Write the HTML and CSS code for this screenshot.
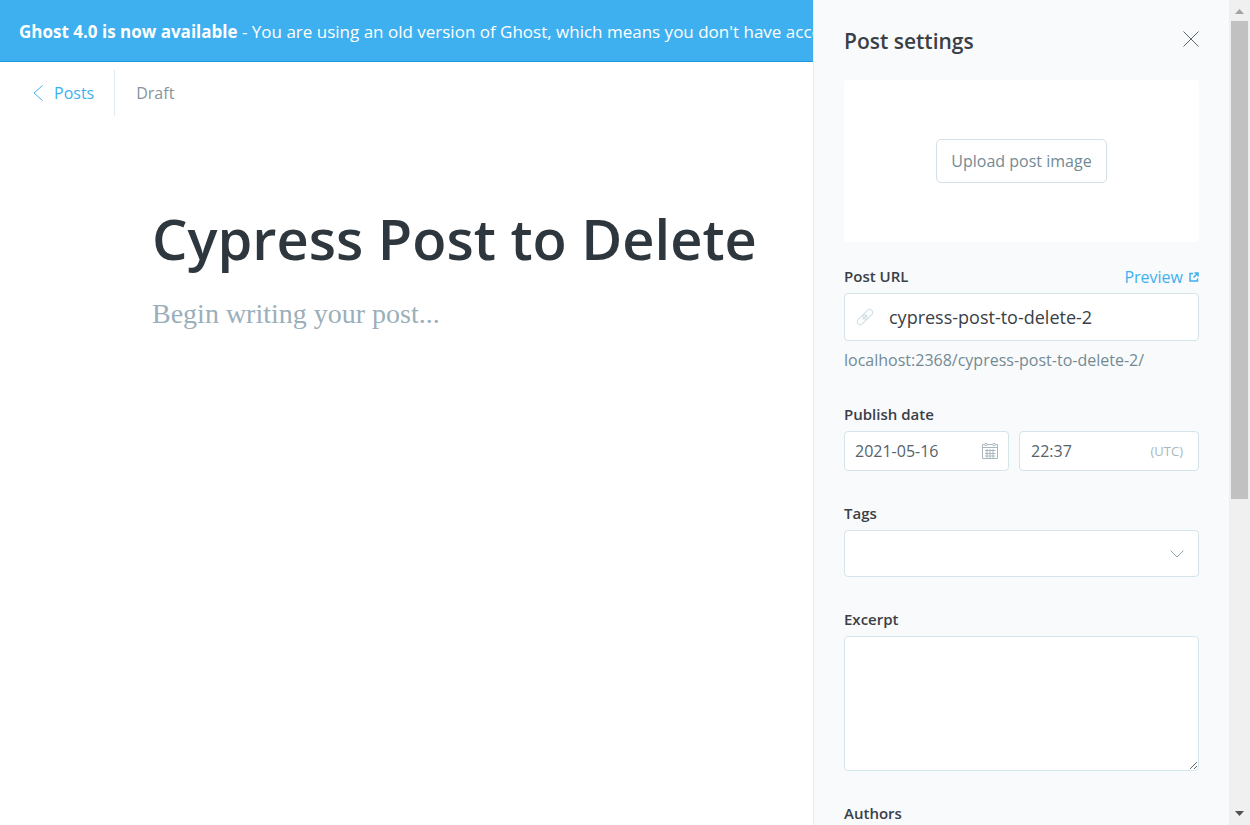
FILE: index.html
```html
<!DOCTYPE html>
<html lang="en">
<head>
<meta charset="utf-8">
<meta name="viewport" content="width=device-width, initial-scale=1">
<title>Post settings - Ghost</title>
<link rel="stylesheet" href="styles.css">
</head>
<body>
<div class="app">
  <main class="editor">
    <div class="banner"><strong>Ghost 4.0 is now available</strong> - You are using an old version of Ghost, which means you don't have access</div>
    <header class="editor-header">
      <a class="back" href="#posts">
        <svg class="back-icon" viewBox="0 0 10 16" aria-hidden="true"><path d="M9.500 .5 1 8l8.500 7.500"/></svg>
        Posts
      </a>
      <span class="status">Draft</span>
    </header>
    <article class="post">
      <h1 class="post-title">Cypress Post to Delete</h1>
      <p class="post-placeholder">Begin writing your post...</p>
    </article>
  </main>
  <aside class="settings">
    <header class="settings-header">
      <h2 class="settings-title">Post settings</h2>
      <button class="close" type="button" aria-label="Close">
        <svg class="close-icon" viewBox="0 0 16 16" aria-hidden="true"><path d="M.5.5l15 15M15.500.5l-15 15"/></svg>
      </button>
    </header>
    <div class="uploader"><button class="upload-button" type="button">Upload post image</button></div>
    <form class="form">
      <div class="group">
        <div class="label-row">
          <label class="label" for="url">Post URL</label>
          <a class="preview" href="#preview">Preview
            <svg class="preview-icon" viewBox="0 0 10 10" aria-hidden="true"><path d="M4 1.500H1v7.500h7.500V6.500M5.500 1H9v3.500M9 1 4.500 5.500"/></svg>
          </a>
        </div>
        <div class="field field-url">
          <svg class="link-icon" viewBox="0 0 18 18" aria-hidden="true">
            <g transform="rotate(-45 9 9)"><rect x="-.5" y="6" width="11" height="6" rx="3"/><rect x="7.500" y="6" width="11" height="6" rx="3"/><path d="M5.500 9h7"/></g>
          </svg>
          <input class="input input-large" id="url" type="text" value="cypress-post-to-delete-2">
        </div>
        <p class="hint">localhost:2368/cypress-post-to-delete-2/</p>
      </div>
      <div class="group">
        <label class="label" for="date">Publish date</label>
        <div class="date-row">
          <div class="field field-date">
            <input class="input" id="date" type="text" value="2021-05-16">
            <svg class="calendar-icon" viewBox="0 0 16 16" aria-hidden="true"><path d="M.5 1.500h15v14H.5zM.5 4.500h15M3 7.500h10.500M3 10.500h10.500M3 13h10.500M5 6v9M8 6v9M11 6v9"/><path class="ring" d="M2.500 1.500a1.500 1 0 0 1 3 0 1.500 1 0 0 1-3 0M10.500 1.500a1.500 1 0 0 1 3 0 1.500 1 0 0 1-3 0"/></svg>
          </div>
          <div class="field field-time">
            <input class="input" type="text" aria-label="Publish time" value="22:37">
            <span class="zone">(UTC)</span>
          </div>
        </div>
      </div>
      <div class="group">
        <label class="label" for="tags">Tags</label>
        <div class="field field-tags">
          <select class="select" id="tags"><option></option></select>
          <svg class="chevron" viewBox="0 0 14 8" aria-hidden="true"><path d="M.5.5 7 7 13.500.5"/></svg>
        </div>
      </div>
      <div class="group">
        <label class="label" for="excerpt">Excerpt</label>
        <textarea class="textarea" id="excerpt"></textarea>
      </div>
      <div class="group">
        <label class="label" for="authors">Authors</label>
        <input class="field" id="authors" type="text">
      </div>
    </form>
  </aside>
  <div class="scrollbar" aria-hidden="true">
    <svg class="arrow arrow-up" viewBox="0 0 9 5"><path d="M0 5 4.500 0 9 5z"/></svg>
    <div class="track"><div class="thumb"></div></div>
    <svg class="arrow" viewBox="0 0 9 5"><path d="M0 0h9L4.500 5z"/></svg>
  </div>
</div>
</body>
</html>
```
FILE: styles.css
```css
* { box-sizing: border-box; }
body {
  margin: 0;
  color: #394047;
  background: #fff;
  font: 16px/24px "Open Sans", "Noto Sans", sans-serif;
}
h1, h2, p { margin: 0; }
a { color: #3eb0ef; text-decoration: none; }
button, input, select, textarea { font: inherit; color: inherit; }
svg { flex: none; fill: none; stroke: currentColor; }

.app { display: flex; height: 100vh; overflow: hidden; }

.editor { flex: 1; min-width: 0; overflow: hidden; }
.banner {
  padding: 20px 19px 17px;
  border-bottom: 1px solid #1e96dc;
  background: #3eb0ef;
  color: #fff;
  font-size: 17px;
  white-space: nowrap;
  overflow: hidden;
}
.editor-header { display: flex; align-items: center; padding: 8px 0 0 33px; }
.back {
  display: flex;
  align-items: center;
  gap: 11px;
  height: 46px;
  padding-right: 20px;
  border-right: 1px solid #dfeaf2;
}
.back-icon { width: 10px; height: 16px; }
.status { padding-left: 21px; color: #84949e; }
.post { padding: 82px 20px 20px 152px; }
.post-title {
  color: #2e373d;
  font-size: 56px;
  font-weight: 600;
  line-height: 80px;
  white-space: nowrap;
}
.post-placeholder {
  margin-top: 18px;
  color: #9bafbb;
  font: 28px/36px "Liberation Serif", serif;
}

.settings {
  width: 416px;
  flex: none;
  overflow: hidden;
  padding: 24px 30px 0;
  border-left: 1px solid #e4edf2;
  background: #f9fafc;
}
.settings-header { display: flex; justify-content: space-between; height: 56px; }
.settings-title { font-size: 21px; font-weight: 600; line-height: 34px; }
.close { height: 30px; padding: 0; border: 0; background: none; color: #5d666d; }
.close-icon { display: block; width: 16px; height: 16px; }
.uploader {
  display: flex;
  align-items: center;
  justify-content: center;
  height: 162px;
  border-radius: 4px;
  background: #fff;
}
.upload-button {
  height: 44px;
  padding: 0 14px;
  border: 1px solid #d5e0e6;
  border-radius: 5px;
  background: #fff;
  color: #738a94;
}
.form { display: flex; flex-direction: column; gap: 31px; padding-top: 23px; }
.label-row { display: flex; justify-content: space-between; }
.label { display: block; margin-bottom: 6px; font-size: 15px; font-weight: 600; line-height: 22px; }
.preview { display: flex; align-items: center; gap: 6px; height: 24px; }
.preview-icon { width: 10px; height: 10px; stroke-width: 1.5; }
.field {
  display: flex;
  align-items: center;
  width: 100%;
  min-width: 0;
  height: 40px;
  border: 1px solid #d5e3eb;
  border-radius: 4px;
  background: #fff;
}
.input {
  flex: 1;
  min-width: 0;
  height: 100%;
  padding: 0;
  border: 0;
  outline: 0;
  background: none;
  color: #55626a;
}
.input-large { color: #394047; font-size: 18px; }
.field-url { height: 48px; padding: 0 11px; gap: 15px; }
.link-icon { width: 18px; height: 18px; color: #cfdde5; }
.hint { margin-top: 7px; color: #738a94; }
.date-row { display: grid; grid-template-columns: 11fr 12fr; gap: 10px; }
.field-date { padding: 0 10px; }
.calendar-icon { width: 16px; height: 16px; color: #aab7bf; }
.ring { fill: #fff; }
.field-time { padding: 0 15px 0 11px; }
.zone { color: #a9b7c0; font-size: 13px; }
.field-tags { height: 47px; padding-right: 14px; }
.select {
  flex: 1;
  height: 100%;
  border: 0;
  outline: 0;
  appearance: none;
  background: none;
}
.chevron { width: 14px; height: 8px; color: #94a6b0; }
.textarea {
  display: block;
  width: 100%;
  height: 135px;
  padding: 10px;
  border: 1px solid #d5e6ee;
  border-radius: 4px;
  background: #fff;
  resize: vertical;
}

.scrollbar {
  display: flex;
  flex: none;
  flex-direction: column;
  align-items: center;
  width: 21px;
  padding: 9px 2px;
  background: #f0f0f0;
}
.arrow { width: 9px; height: 5px; fill: #505050; stroke: none; }
.arrow-up { fill: #a3a3a3; }
.track { flex: 1; width: 100%; padding: 7px 0; }
.thumb { height: 61%; background: #c1c1c1; }
```
